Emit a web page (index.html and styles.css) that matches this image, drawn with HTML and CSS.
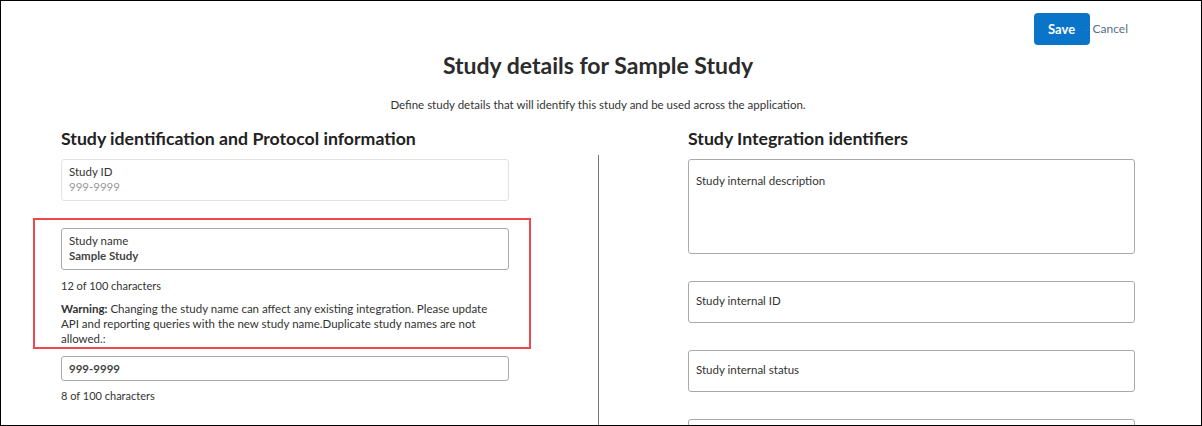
FILE: index.html
```html
<!DOCTYPE html>
<html lang="en">
<head>
<meta charset="utf-8">
<title>Study details</title>
<link rel="stylesheet" href="styles.css">
</head>
<body>
<div class="frame">
  <div class="actions">
    <button class="btn-save">Save</button>
    <a class="btn-cancel">Cancel</a>
  </div>
  <h1 class="title">Study details for Sample Study</h1>
  <p class="subtitle">Define study details that will identify this study and be used across the application.</p>
  <div class="columns">
    <section class="col">
      <h2 class="section-title">Study identification and Protocol information</h2>
      <div class="field field-readonly">
        <div class="field-label">Study ID</div>
        <div class="field-placeholder">999-9999</div>
      </div>
      <div class="highlight">
        <div class="field field-active">
          <div class="field-label">Study name</div>
          <div class="field-value">Sample Study</div>
        </div>
        <div class="counter">12 of 100 characters</div>
        <p class="warning"><strong class="warning-lead">Warning:</strong> Changing the study name can affect any existing integration. Please update API and reporting queries with the new study name.Duplicate study names are not allowed.:</p>
      </div>
      <div class="field field-compact">
        <div class="field-value">999-9999</div>
      </div>
      <div class="counter counter-last">8 of 100 characters</div>
    </section>
    <div class="divider"></div>
    <section class="col">
      <h2 class="section-title">Study Integration identifiers</h2>
      <div class="field field-textarea">
        <div class="field-label">Study internal description</div>
      </div>
      <div class="field field-center">
        <div class="field-label">Study internal ID</div>
      </div>
      <div class="field field-center">
        <div class="field-label">Study internal status</div>
      </div>
      <div class="field field-center"></div>
    </section>
  </div>
</div>
</body>
</html>
```

FILE: styles.css
```css
* { box-sizing: border-box; }
html, body { margin: 0; padding: 0; background: #fff; }
body {
  font-family: Lato, "Noto Sans", sans-serif;
  color: #333;
}
.frame {
  width: 1202px;
  height: 426px;
  border: 1px solid #000;
  overflow: hidden;
  display: flex;
  flex-direction: column;
}
.actions {
  display: flex;
  align-items: center;
  justify-content: flex-end;
  gap: 3px;
  padding: 12px 73px 0 0;
}
.btn-save {
  width: 56px;
  height: 32px;
  border: none;
  border-radius: 4px;
  background: #0a74c9;
  color: #fff;
  font-family: inherit;
  font-weight: 700;
  font-size: 13px;
  padding: 0;
}
.btn-cancel {
  color: #5a6f88;
  font-size: 12px;
  line-height: 32px;
}
.title {
  margin: 5px 0 0;
  text-align: center;
  font-size: 23px;
  font-weight: 700;
  line-height: 30px;
  color: #2b2b2b;
  padding-right: 6px;
}
.subtitle {
  margin: 18px 0 0;
  text-align: center;
  font-size: 11.5px;
  line-height: 14px;
  color: #333;
  padding-right: 6px;
}
.columns {
  display: grid;
  grid-template-columns: 448px 179px 447px;
  padding-left: 60px;
  margin-top: 16px;
  flex: 1;
}
.col { display: flex; flex-direction: column; }
.section-title {
  margin: 0 0 9px;
  font-size: 17.7px;
  line-height: 22px;
  font-weight: 700;
  color: #222;
}
.divider {
  justify-self: center;
  width: 1px;
  background: #777;
  margin-top: 27px;
}
.field {
  border: 1px solid #aaa;
  border-radius: 3px;
  background: #fff;
  padding: 0 7px;
  display: flex;
  flex-direction: column;
}
.field-readonly {
  border-color: #e2e2e2;
  height: 42px;
  justify-content: center;
  padding-bottom: 2px;
}
.field-active {
  height: 42px;
  justify-content: center;
  padding-bottom: 2px;
}
.field-label {
  font-size: 11.5px;
  line-height: 15px;
  color: #333;
}
.field-placeholder {
  font-size: 11.5px;
  line-height: 15px;
  color: #999;
}
.field-value {
  font-size: 11.5px;
  line-height: 15px;
  font-weight: 700;
  color: #444;
}
.highlight {
  margin: 17px -22px 0 -28px;
  padding: 8px 20px 0 26px;
  border: 2px solid #f0474c;
  height: 131px;
}
.counter {
  font-size: 11px;
  line-height: 15px;
  margin-top: 8px;
  color: #333;
}
.counter-last { margin-top: 7px; }
.warning {
  margin: 8px 0 0;
  font-size: 11.5px;
  line-height: 15px;
  color: #333;
  width: 444px;
}
.warning-lead { font-weight: 700; }
.field-compact {
  height: 25px;
  margin-top: 7px;
  justify-content: center;
  padding-bottom: 1px;
}
.field-textarea {
  height: 95px;
  padding-top: 13px;
}
.field-center {
  height: 42px;
  justify-content: center;
  margin-top: 27px;
  padding-bottom: 3px;
}
```
